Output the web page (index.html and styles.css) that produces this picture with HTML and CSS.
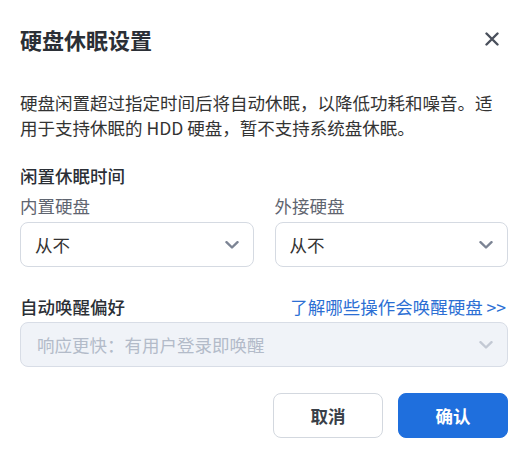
FILE: index.html
```html
<!DOCTYPE html>
<html lang="zh-CN">
<head>
<meta charset="utf-8">
<title>硬盘休眠设置</title>
<link rel="stylesheet" href="styles.css">
</head>
<body>
<div class="dialog">
  <div class="header">
    <div class="title">硬盘休眠设置</div>
    <button class="close" aria-label="关闭">
      <svg width="14" height="14" viewBox="0 0 14 14"><path d="M1.5 1.5 L12.5 12.5 M12.5 1.5 L1.5 12.5" stroke="#4a505c" stroke-width="2.4" stroke-linecap="round" fill="none"/></svg>
    </button>
  </div>
  <p class="desc">硬盘闲置超过指定时间后将自动休眠，以降低功耗和噪音。适用于支持休眠的 HDD 硬盘，暂不支持系统盘休眠。</p>

  <div class="section-title">闲置休眠时间</div>
  <div class="cols">
    <div class="field">
      <div class="label">内置硬盘</div>
      <div class="select">
        <span class="value">从不</span>
        <svg class="chev" width="14" height="8" viewBox="0 0 14 8"><path d="M1.5 1.2 L7 6.5 L12.5 1.2" stroke="#7c8494" stroke-width="2.4" stroke-linecap="round" stroke-linejoin="round" fill="none"/></svg>
      </div>
    </div>
    <div class="field">
      <div class="label">外接硬盘</div>
      <div class="select">
        <span class="value">从不</span>
        <svg class="chev" width="14" height="8" viewBox="0 0 14 8"><path d="M1.5 1.2 L7 6.5 L12.5 1.2" stroke="#7c8494" stroke-width="2.4" stroke-linecap="round" stroke-linejoin="round" fill="none"/></svg>
      </div>
    </div>
  </div>

  <div class="wake-row">
    <div class="section-title inline">自动唤醒偏好</div>
    <a class="link" href="#">了解哪些操作会唤醒硬盘 &gt;&gt;</a>
  </div>
  <div class="select disabled">
    <span class="value">响应更快：有用户登录即唤醒</span>
    <svg class="chev" width="14" height="8" viewBox="0 0 14 8"><path d="M1.5 1.2 L7 6.5 L12.5 1.2" stroke="#c3c9d4" stroke-width="2.4" stroke-linecap="round" stroke-linejoin="round" fill="none"/></svg>
  </div>

  <div class="footer">
    <button class="btn btn-cancel">取消</button>
    <button class="btn btn-ok">确认</button>
  </div>
</div>
</body>
</html>
```

FILE: styles.css
```css
* { box-sizing: border-box; }
html, body {
  margin: 0;
  padding: 0;
  background: #ffffff;
}
body {
  font-family: "Noto Sans CJK SC", "Noto Sans", "Liberation Sans", sans-serif;
  color: #333333;
  font-size: 17.5px;
}
.dialog {
  width: 532px;
  padding: 24px 24px 0 20px;
}
.header {
  display: flex;
  justify-content: space-between;
  align-items: center;
  height: 30px;
}
.title {
  font-size: 22px;
  font-weight: 700;
  color: #2b2f36;
  line-height: 30px;
}
.close {
  border: 0;
  background: none;
  padding: 0;
  margin-right: 9px;
  width: 14px;
  height: 14px;
  display: flex;
}
.desc {
  margin: 36px 0 0 0;
  line-height: 25px;
  color: #333333;
}
.section-title {
  margin-top: 23px;
  line-height: 25px;
  font-weight: 500;
  color: #2b2f36;
}
.section-title.inline {
  margin-top: 0;
}
.cols {
  display: grid;
  grid-template-columns: 1fr 1fr;
  column-gap: 21px;
  margin-top: 5px;
}
.label {
  line-height: 25px;
  color: #5f6570;
}
.select {
  margin-top: 4px;
  height: 45px;
  border: 1px solid #d5dae2;
  border-radius: 8px;
  display: flex;
  align-items: center;
  justify-content: space-between;
  padding: 0 14px 0 14px;
  background: #ffffff;
}
.select .value {
  color: #333333;
  line-height: 25px;
}
.chev {
  display: block;
}
.wake-row {
  margin-top: 27px;
  display: flex;
  justify-content: space-between;
  align-items: baseline;
}
.link {
  color: #2c6fd4;
  text-decoration: none;
  line-height: 25px;
  margin-right: 2px;
}
.select.disabled {
  margin-top: 3px;
  background: #f0f3f8;
  border-color: #d8dde6;
  padding-left: 16px;
}
.select.disabled .value {
  color: #b3bbc9;
}
.footer {
  margin-top: 26px;
  display: flex;
  justify-content: flex-end;
  gap: 15px;
}
.btn {
  width: 110px;
  height: 45px;
  border-radius: 8px;
  font-family: inherit;
  font-size: 17.5px;
  font-weight: 700;
  cursor: pointer;
}
.btn-cancel {
  background: #ffffff;
  border: 1px solid #d3d8df;
  color: #3a3f48;
}
.btn-ok {
  background: #1f6fdd;
  border: 1px solid #1f6fdd;
  color: #ffffff;
}
```
